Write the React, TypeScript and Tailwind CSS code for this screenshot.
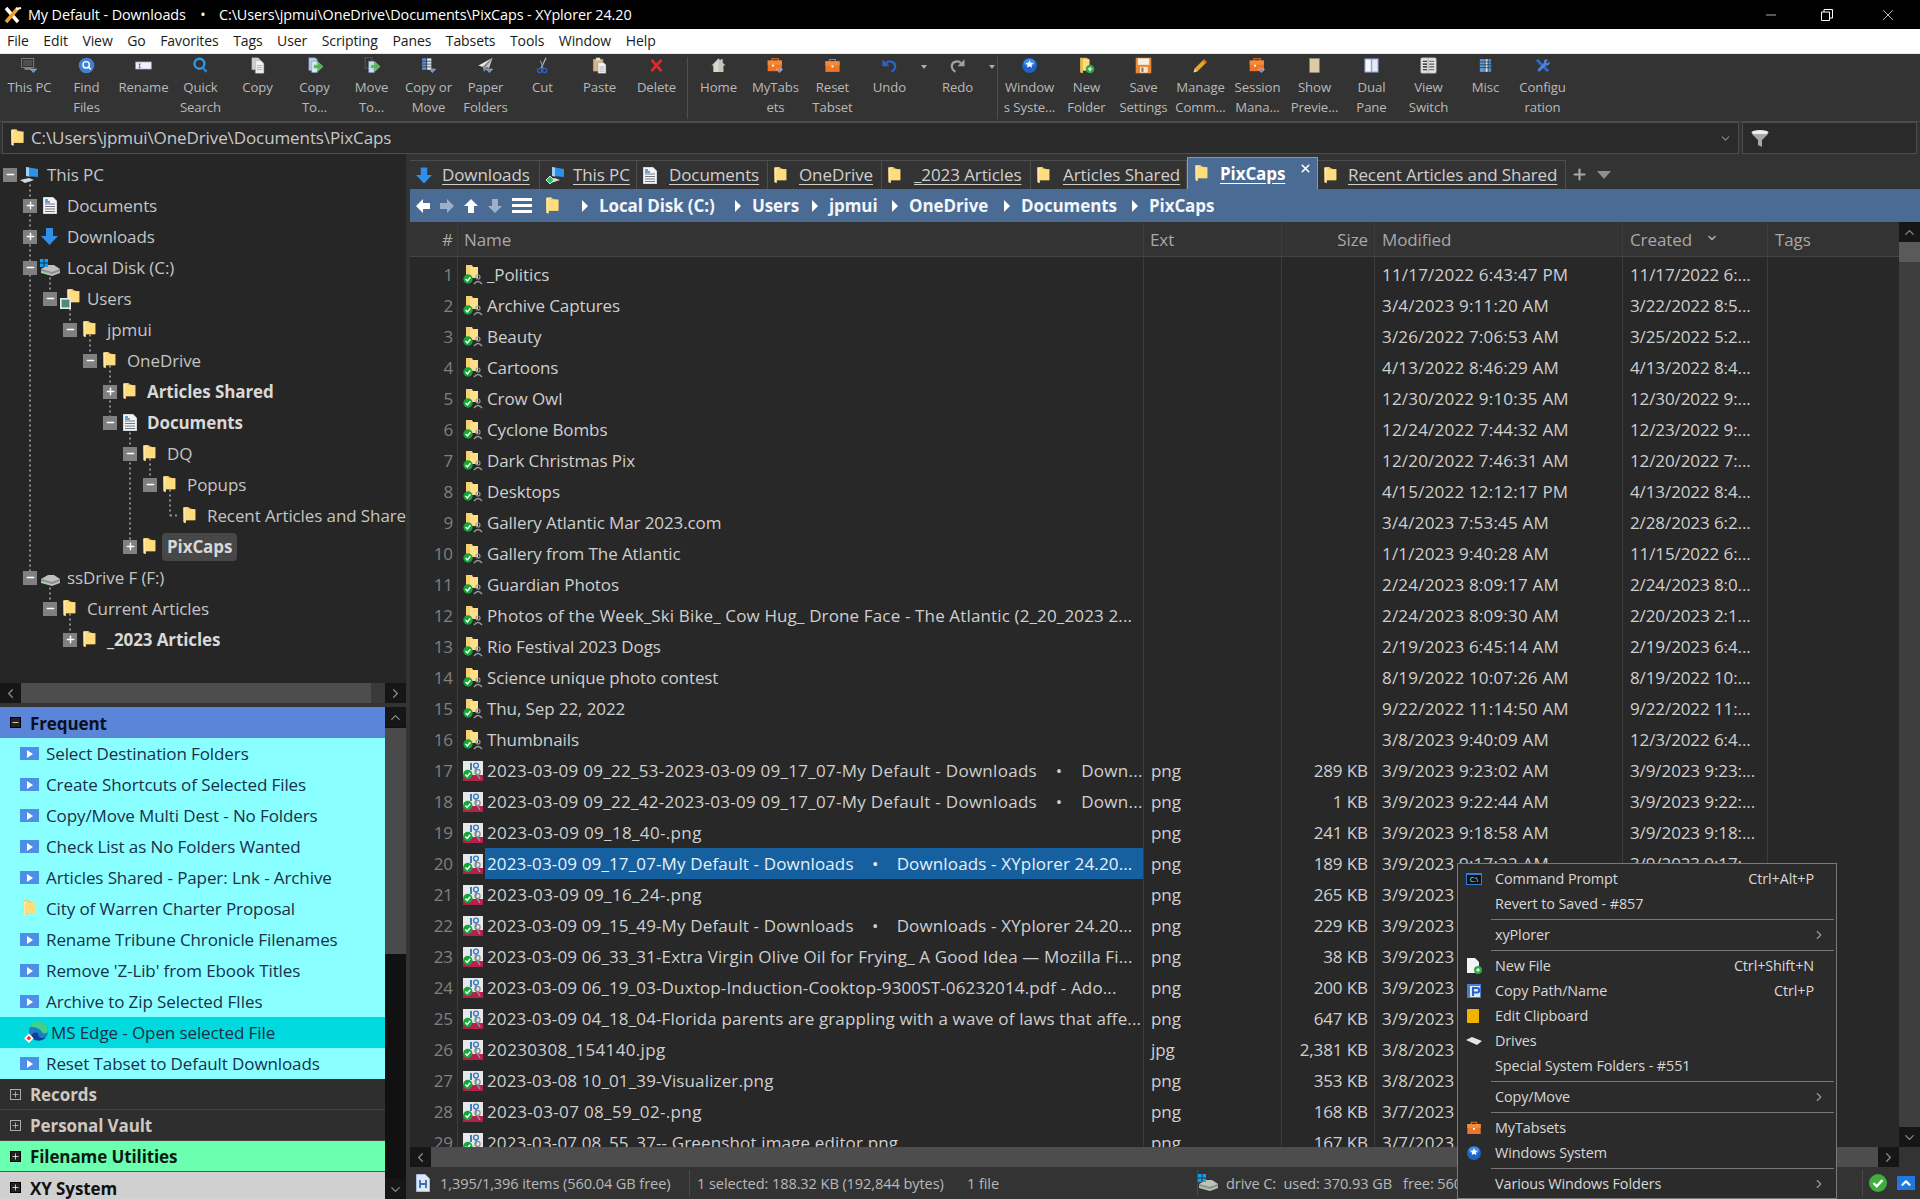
import type { ReactNode } from "react";
import { ChevronDown, ChevronLeft, ChevronRight, ChevronUp, Minus, Plus, X } from "lucide-react";

const Folder = ({ className = "w-[15px] h-[20px]" }: { className?: string }) => (
  <svg viewBox="0 0 15 20" className={className}>
    <path d="M0 1.5Q0 0 1.5 0H6L8 1.5L14 3.5V15.5H3V19L0.6 18Z" fill="#e8bd55" />
    <path d="M3 2.5L14.5 2.5V15.5H3Z" fill="#ffdc7c" />
    <path d="M0.5 1L7 .5L3 3V18.5L.5 18Z" fill="#ffe9a8" />
  </svg>
);

const Badge = ({ cx = 5, cy = 15 }: { cx?: number; cy?: number }) => (
  <g>
    <circle cx={cx} cy={cy} r="4.7" fill="#17a53a" />
    <path d={`M${cx - 2.4} ${cy}l1.8 1.9l3-3.6`} fill="none" stroke="#fff" strokeWidth="1.5" />
  </g>
);

const SyncFolder = () => (
  <svg viewBox="0 0 22 20" className="w-[22px] h-[20px] shrink-0">
    <path d="M3 0H9L10 2H15V13H3Z" fill="#f7d070" />
    <path d="M7 2H15V13H7Z" fill="#ffdf88" />
    <circle cx="15" cy="12" r="2" fill="none" stroke="#9a9a9a" strokeWidth="1.2" />
    <path d="M11 19q4-5 8 0" fill="none" stroke="#9a9a9a" strokeWidth="1.4" />
    <Badge cx={5} cy={14} />
  </svg>
);

const PicFile = () => (
  <svg viewBox="0 0 20 20" className="w-[20px] h-[20px] shrink-0">
    <rect width="20" height="20" fill="#e8e8e8" />
    <rect x="0" y="14" width="20" height="6" fill="#b5204c" />
    <rect x="7" y="2" width="2" height="7" fill="#3a7ec0" />
    <circle cx="13" cy="4.5" r="2.4" fill="none" stroke="#3a7ec0" strokeWidth="1.4" />
    <path d="M13 7v4" stroke="#3a7ec0" strokeWidth="1.4" />
    <path d="M12 10l5 8" stroke="#8aa" strokeWidth="1.2" />
    <circle cx="14.5" cy="11" r="2.6" fill="none" stroke="#888" strokeWidth="1.2" />
    <Badge cx={4.8} cy={13.5} />
  </svg>
);

const Triangle = () => <path d="M13 17h9l-4.5 5Z" fill="#5b8fd8" stroke="#ddd" strokeWidth=".7" />;

const Briefcase = ({ small }: { small?: boolean }) => (
  <svg viewBox="0 0 24 24" className={small ? "w-[16px] h-[16px]" : "w-[17px] h-[17px]"}>
    <path d="M8 7V3.5h8V7" fill="none" stroke="#e0752a" strokeWidth="1.6" />
    <rect x="2" y="6" width="20" height="15" fill="#ee7626" />
    <rect x="2" y="6" width="20" height="6" fill="#f58a3a" />
    <rect x="10.5" y="12" width="3" height="2.5" fill="#fff" />
  </svg>
);

const BallStar = ({ className = "w-[17px] h-[17px]" }: { className?: string }) => (
  <svg viewBox="0 0 24 24" className={className}>
    <circle cx="12" cy="12" r="10.5" fill="#1f62c8" />
    <ellipse cx="12" cy="8" rx="8" ry="5.5" fill="#3f8be8" />
    <path d="M12 4.5l1.7 3.7 4 .4-3 2.7.9 4-3.6-2.1-3.6 2.1.9-4-3-2.7 4-.4Z" fill="#fff" />
  </svg>
);

const toolIcons: Record<string, ReactNode> = {
  pc: (
    <svg viewBox="0 0 24 24" className="w-[17px] h-[17px]">
      <rect x="1" y="2" width="17" height="13" fill="#2c2c2c" stroke="#9a9a9a" />
      <rect x="3" y="4" width="13" height="9" fill="#4f4f4f" />
      <rect x="5" y="15" width="9" height="3" fill="#8a8a8a" />
      <Triangle />
    </svg>
  ),
  find: (
    <svg viewBox="0 0 24 24" className="w-[17px] h-[17px]">
      <circle cx="12" cy="12" r="11" fill="#3f82d2" />
      <circle cx="11.5" cy="11" r="4.5" fill="none" stroke="#fff" strokeWidth="2" />
      <path d="M15 14.5l3 3" stroke="#fff" strokeWidth="2.2" />
    </svg>
  ),
  rename: (
    <svg viewBox="0 0 24 24" className="w-[17px] h-[17px]">
      <rect x="1" y="7" width="22" height="10" fill="#eef2fa" stroke="#8fa4c4" />
      <path d="M5 10h3M6.5 10v5M5 15h3" stroke="#445" strokeWidth="1" />
    </svg>
  ),
  quick: (
    <svg viewBox="0 0 24 24" className="w-[17px] h-[17px]">
      <circle cx="10.5" cy="9.5" r="7" fill="none" stroke="#2f9ae8" strokeWidth="3.4" />
      <path d="M15 15l5.5 6" stroke="#2f7fd0" strokeWidth="3.6" />
    </svg>
  ),
  copy: (
    <svg viewBox="0 0 24 24" className="w-[17px] h-[17px]">
      <path d="M4 1h9l3 3v14H4Z" fill="#cfcfcf" stroke="#999" strokeWidth=".6" />
      <path d="M9 5h8l4 4v14H9Z" fill="#f2f2f2" stroke="#999" strokeWidth=".6" />
      <path d="M11 12h8M11 15h8M11 18h8" stroke="#9a9a9a" />
    </svg>
  ),
  copyTo: (
    <svg viewBox="0 0 24 24" className="w-[17px] h-[17px]">
      <path d="M4 1h9l3 3v15H4Z" fill="#b9cbe6" stroke="#6f8fc0" strokeWidth=".7" />
      <path d="M8 6h8v16H8Z" fill="#dce6f5" stroke="#6f8fc0" strokeWidth=".7" />
      <path d="M11 11h6V7l7 6.5-7 6.5v-4h-6Z" fill="#4fb84a" stroke="#c9f0c0" strokeWidth=".6" />
    </svg>
  ),
  moveTo: (
    <svg viewBox="0 0 24 24" className="w-[17px] h-[17px]">
      <path d="M3 1h10v15H3Z" fill="none" stroke="#7f9fd0" strokeDasharray="1.5 1.5" />
      <path d="M8 6h8v16H8Z" fill="#cfdcf0" stroke="#6f8fc0" strokeWidth=".7" />
      <path d="M11 11h6V7l7 6.5-7 6.5v-4h-6Z" fill="#4fb84a" stroke="#c9f0c0" strokeWidth=".6" />
    </svg>
  ),
  copyMove: (
    <svg viewBox="0 0 24 24" className="w-[17px] h-[17px]">
      <rect x="3" y="2" width="6" height="16" fill="#5f93d6" />
      <rect x="10" y="2" width="6" height="16" fill="#dfe8f5" />
      <path d="M3 6h13M3 10h13M3 14h13" stroke="#2b2b2b" />
      <Triangle />
    </svg>
  ),
  paper: (
    <svg viewBox="0 0 24 24" className="w-[17px] h-[17px]">
      <path d="M22 1L2 12l6 2Z" fill="#e6e6e6" />
      <path d="M22 1L8 14l2 7 3-4Z" fill="#8f8f8f" />
      <path d="M22 1l-5 15-4-2Z" fill="#c8c8c8" />
      <Triangle />
    </svg>
  ),
  cut: (
    <svg viewBox="0 0 24 24" className="w-[17px] h-[17px]">
      <path d="M17 1L10 16" stroke="#aab2c0" strokeWidth="1.8" />
      <path d="M9 5l4 11" stroke="#7f8da8" strokeWidth="1.6" />
      <circle cx="8" cy="19" r="3" fill="none" stroke="#2f62c0" strokeWidth="1.8" />
      <circle cx="15" cy="19" r="3" fill="none" stroke="#2f62c0" strokeWidth="1.8" />
    </svg>
  ),
  paste: (
    <svg viewBox="0 0 24 24" className="w-[17px] h-[17px]">
      <rect x="3" y="3" width="14" height="17" fill="#d4b585" stroke="#9a7b4a" strokeWidth=".6" />
      <rect x="7" y="1" width="6" height="4" fill="#e0e0e0" />
      <path d="M10 8h8l3 3v12H10Z" fill="#f4f4f4" stroke="#999" strokeWidth=".6" />
      <path d="M12 14h7M12 17h7M12 20h7" stroke="#9a9a9a" />
    </svg>
  ),
  del: (
    <svg viewBox="0 0 24 24" className="w-[17px] h-[17px]">
      <path d="M5 4l14 16M19 4L5 20" stroke="#e02a2a" strokeWidth="4" />
    </svg>
  ),
  home: (
    <svg viewBox="0 0 24 24" className="w-[17px] h-[17px]">
      <path d="M12 2L2 12h3v9h14v-9h3l-4-4V3h-3v2Z" fill="#c9c4ba" />
      <path d="M12 2L5 12v9h7Z" fill="#dcd8cf" />
    </svg>
  ),
  tabsDown: (
    <svg viewBox="0 0 24 24" className="w-[17px] h-[17px]">
      <path d="M7 6V2.5h9V6" fill="none" stroke="#e0752a" strokeWidth="1.6" />
      <rect x="1" y="5" width="20" height="15" fill="#ee7626" />
      <rect x="1" y="5" width="20" height="6" fill="#f58a3a" />
      <rect x="7" y="11" width="3" height="2.5" fill="#fff" />
      <Triangle />
    </svg>
  ),
  tabs: <Briefcase />,
  undo: (
    <svg viewBox="0 0 24 24" className="w-[17px] h-[17px]">
      <path d="M7 9c3-4 12-4 13 3 .5 4-2 7-5 9" fill="none" stroke="#2f62c8" strokeWidth="3.2" />
      <path d="M2 3v10h10Z" fill="#2f62c8" />
    </svg>
  ),
  redo: (
    <svg viewBox="0 0 24 24" className="w-[17px] h-[17px]">
      <path d="M17 9C14 5 5 5 4 12c-.5 4 2 7 5 9" fill="none" stroke="#9aa2ad" strokeWidth="3.2" />
      <path d="M22 3v10H12Z" fill="#9aa2ad" />
    </svg>
  ),
  win: <BallStar />,
  newFolder: (
    <svg viewBox="0 0 24 24" className="w-[17px] h-[17px]">
      <path d="M3 1h9l4 3v15H7v4l-4-1Z" fill="#e8bd55" />
      <path d="M7 3h9v16H7Z" fill="#ffdc7c" />
      <circle cx="17" cy="17" r="6" fill="#2fa84a" />
      <path d="M14 17h6M17 14v6" stroke="#fff" strokeWidth="1.6" />
    </svg>
  ),
  save: (
    <svg viewBox="0 0 24 24" className="w-[17px] h-[17px]">
      <rect x="1" y="1" width="22" height="22" fill="#e8893a" />
      <rect x="4" y="2" width="16" height="9" fill="#f8f0e4" />
      <rect x="7" y="14" width="11" height="8" fill="#f2e8d8" />
      <rect x="9" y="15" width="3" height="6" fill="#8a7a62" />
    </svg>
  ),
  pencil: (
    <svg viewBox="0 0 24 24" className="w-[17px] h-[17px]">
      <path d="M17 3l4 4L8 20l-4-4Z" fill="#f0a51e" />
      <path d="M17 3l4 4-2 2-4-4Z" fill="#e05a2a" />
      <path d="M4 16l4 4-6 2Z" fill="#f1d9ad" />
    </svg>
  ),
  show: (
    <svg viewBox="0 0 24 24" className="w-[17px] h-[17px]">
      <rect x="5" y="2" width="14" height="20" fill="#dccba6" stroke="#8f8570" strokeWidth=".6" />
    </svg>
  ),
  dual: (
    <svg viewBox="0 0 24 24" className="w-[17px] h-[17px]">
      <rect x="2" y="2" width="20" height="20" fill="#8ea4cc" />
      <rect x="3.5" y="3.5" width="7.5" height="17" fill="#f4f7fc" />
      <rect x="13" y="3.5" width="7.5" height="17" fill="#e4ebf7" />
    </svg>
  ),
  view: (
    <svg viewBox="0 0 24 24" className="w-[17px] h-[17px]">
      <rect x="1" y="1" width="22" height="22" rx="2" fill="#e4e4e4" stroke="#888" />
      <path d="M4 6h6M4 10h6M4 14h6M4 18h6" stroke="#111" strokeWidth="1.7" />
      <path d="M13 6h7M13 10h7M13 14h7M13 18h7" stroke="#555" strokeWidth="1.7" />
      <path d="M11.5 2v20" stroke="#999" />
    </svg>
  ),
  misc: (
    <svg viewBox="0 0 24 24" className="w-[17px] h-[17px]">
      <rect x="4" y="3" width="7" height="18" fill="#5f9bd8" />
      <rect x="12" y="3" width="3" height="18" fill="#dfe8f5" />
      <rect x="16" y="3" width="4" height="18" fill="#4f8ed0" />
      <path d="M4 7h16M4 11h16M4 15h16" stroke="#2b2b2b" />
    </svg>
  ),
  config: (
    <svg viewBox="0 0 24 24" className="w-[17px] h-[17px]">
      <path d="M4 4l16 16" stroke="#3568c4" strokeWidth="4" />
      <path d="M20 4c-3-2-7 0-6 4L5 18l2 3 10-9c4 1 6-3 5-6l-3 3-2-2Z" fill="#4a83dc" />
    </svg>
  ),
};

type Tool = { k: string; l1: string; l2?: string; arrow?: boolean };

const tools1: Tool[] = [
  { k: "pc", l1: "This PC" },
  { k: "find", l1: "Find", l2: "Files" },
  { k: "rename", l1: "Rename" },
  { k: "quick", l1: "Quick", l2: "Search" },
  { k: "copy", l1: "Copy" },
  { k: "copyTo", l1: "Copy", l2: "To..." },
  { k: "moveTo", l1: "Move", l2: "To..." },
  { k: "copyMove", l1: "Copy or", l2: "Move" },
  { k: "paper", l1: "Paper", l2: "Folders" },
  { k: "cut", l1: "Cut" },
  { k: "paste", l1: "Paste" },
  { k: "del", l1: "Delete" },
];
const tools2: Tool[] = [
  { k: "home", l1: "Home" },
  { k: "tabsDown", l1: "MyTabs", l2: "ets" },
  { k: "tabs", l1: "Reset", l2: "Tabset" },
  { k: "undo", l1: "Undo", arrow: true },
  { k: "redo", l1: "Redo", arrow: true },
];
const tools3: Tool[] = [
  { k: "win", l1: "Window", l2: "s Syste..." },
  { k: "newFolder", l1: "New", l2: "Folder" },
  { k: "save", l1: "Save", l2: "Settings" },
  { k: "pencil", l1: "Manage", l2: "Comm..." },
  { k: "tabsDown", l1: "Session", l2: "Mana..." },
  { k: "show", l1: "Show", l2: "Previe..." },
  { k: "dual", l1: "Dual", l2: "Pane" },
  { k: "view", l1: "View", l2: "Switch" },
  { k: "misc", l1: "Misc" },
  { k: "config", l1: "Configu", l2: "ration" },
];

const ToolButton = ({ t }: { t: Tool }) => (
  <div className="flex">
    <div className="w-[57px] flex flex-col items-center pt-[3px] text-[13.2px] leading-[20px] text-[#b9b9b9] whitespace-nowrap">
      <div className="h-[17px] mb-[3px]">{toolIcons[t.k]}</div>
      <span>{t.l1}</span>
      {t.l2 && <span>{t.l2}</span>}
    </div>
    {t.arrow && (
      <div className="w-[11px] pt-[11px] flex justify-center">
        <span className="border-x-[3.5px] border-x-transparent border-t-[4px] border-t-[#aaa] h-0 w-0" />
      </div>
    )}
  </div>
);

const Toolbar = () => (
  <div className="h-[68px] bg-[#333] border-b border-[#4a4a4a] flex pl-px shrink-0">
    {tools1.map((t, i) => (
      <ToolButton key={i} t={t} />
    ))}
    <div className="w-px h-[62px] mt-[3px] ml-[2px] mr-[2px] bg-[#4f4f4f]" />
    {tools2.map((t, i) => (
      <ToolButton key={i} t={t} />
    ))}
    <div className="w-px h-[62px] mt-[3px] mr-[3px] bg-[#4f4f4f]" />
    {tools3.map((t, i) => (
      <ToolButton key={i} t={t} />
    ))}
  </div>
);

const menus = ["File", "Edit", "View", "Go", "Favorites", "Tags", "User", "Scripting", "Panes", "Tabsets", "Tools", "Window", "Help"];

const TreeBox = ({ open }: { open: boolean }) => (
  <span className="w-[14px] h-[14px] bg-[#808080] flex items-center justify-center shrink-0 text-white">
    {open ? <Minus size={11} strokeWidth={3} /> : <Plus size={11} strokeWidth={3} />}
  </span>
);

const DocIcon = () => (
  <svg viewBox="0 0 14 17" className="w-[14px] h-[17px]">
    <path d="M0 0h10l4 4v13H0Z" fill="#f4f4f4" stroke="#888" strokeWidth=".5" />
    <path d="M2 7h10M2 9.5h10M2 12h10M2 14.5h10" stroke="#778" />
    <path d="M2 3h3M2 5h5" stroke="#2f8ae0" strokeWidth="1.3" />
  </svg>
);
const DownIcon = ({ className = "w-[17px] h-[17px]" }: { className?: string }) => (
  <svg viewBox="0 0 17 17" className={className}>
    <path d="M5 0h7v8h5l-8.500 9L0 8h5Z" fill="#2e90e8" />
  </svg>
);
const PcIcon = ({ sync }: { sync?: boolean }) => (
  <svg viewBox="0 0 20 18" className="w-[20px] h-[18px]">
    <path d="M6 1l12 2v8L6 10Z" fill="#2e90e8" />
    <path d="M6 1l3 .5v9L6 10Z" fill="#9fd0f5" />
    <path d="M0 14l9-2 5 2-9 3Z" fill="#d8d8d8" />
    {sync && <path d="M4 10l4 4-4 4-4-4Z" fill="#30c060" stroke="#fff" strokeWidth=".8" />}
  </svg>
);
const DiskIcon = ({ win }: { win?: boolean }) => (
  <svg viewBox="0 0 20 18" className="w-[20px] h-[18px]">
    <path d="M1 10l7-4h6l6 4v4l-8 3-11-3Z" fill="#bfbfbf" />
    <path d="M1 10l11 3 8-3v2l-8 3-11-3Z" fill="#8a8a8a" />
    <path d="M3 12l8 2v1l-8-2Z" fill="#6bd06b" />
    {win && (
      <g fill="#10a0f0">
        <rect x="0" y="0" width="3.500" height="3.500" />
        <rect x="4.500" y="0" width="3.500" height="3.500" />
        <rect x="0" y="4.500" width="3.500" height="3.500" />
        <rect x="4.500" y="4.500" width="3.500" height="3.500" />
      </g>
    )}
  </svg>
);

type TreeNode = { lvl: number; label: string; icon: ReactNode; box?: "+" | "-"; bold?: boolean; sel?: boolean };

const FolderPic = () => (
  <span className="relative flex w-[20px] h-[20px] justify-end">
    <Folder className="w-[13px] h-[17px]" />
    <svg viewBox="0 0 10 10" className="absolute left-0 bottom-0 w-[11px] h-[11px]">
      <rect width="10" height="10" fill="#e8e8e8" />
      <rect x="1.500" y="1.500" width="7" height="7" fill="#4f8a7a" />
    </svg>
  </span>
);

const tree: TreeNode[] = [
  { lvl: 0, label: "This PC", icon: <PcIcon />, box: "-" },
  { lvl: 1, label: "Documents", icon: <DocIcon />, box: "+" },
  { lvl: 1, label: "Downloads", icon: <DownIcon />, box: "+" },
  { lvl: 1, label: "Local Disk (C:)", icon: <DiskIcon win />, box: "-" },
  { lvl: 2, label: "Users", icon: <FolderPic />, box: "-" },
  { lvl: 3, label: "jpmui", icon: <Folder className="w-[13px] h-[17px]" />, box: "-" },
  { lvl: 4, label: "OneDrive", icon: <Folder className="w-[13px] h-[17px]" />, box: "-" },
  { lvl: 5, label: "Articles Shared", icon: <Folder className="w-[13px] h-[17px]" />, box: "+", bold: true },
  { lvl: 5, label: "Documents", icon: <DocIcon />, box: "-", bold: true },
  { lvl: 6, label: "DQ", icon: <Folder className="w-[13px] h-[17px]" />, box: "-" },
  { lvl: 7, label: "Popups", icon: <Folder className="w-[13px] h-[17px]" />, box: "-" },
  { lvl: 8, label: "Recent Articles and Shared", icon: <Folder className="w-[13px] h-[17px]" /> },
  { lvl: 6, label: "PixCaps", icon: <Folder className="w-[13px] h-[17px]" />, box: "+", bold: true, sel: true },
  { lvl: 1, label: "ssDrive F (F:)", icon: <DiskIcon />, box: "-" },
  { lvl: 2, label: "Current Articles", icon: <Folder className="w-[13px] h-[17px]" />, box: "-" },
  { lvl: 3, label: "_2023 Articles", icon: <Folder className="w-[13px] h-[17px]" />, box: "+", bold: true },
];

const indents = ["w-[3px]", "w-[23px]", "w-[43px]", "w-[63px]", "w-[83px]", "w-[103px]", "w-[123px]", "w-[143px]", "w-[163px]"];

const rowY = (n: number) => 20.5 + 31 * n;
const treeLines: [number, number, number][] = [
  [30, 0, 13],
  [50, 3, 4],
  [50, 13, 14],
  [70, 4, 5],
  [70, 14, 15],
  [90, 5, 6],
  [110, 6, 8],
  [130, 8, 12],
  [150, 9, 10],
  [170, 10, 11],
];

const Tree = () => (
  <div className="relative flex-1 bg-[#262626] pt-[5px] overflow-hidden">
    <svg className="absolute left-0 top-0 w-[406px] h-[530px]">
      {treeLines.map(([x, a, b], i) => (
        <path key={i} d={`M${x} ${rowY(a)}V${rowY(b)}`} stroke="#8a8a8a" strokeWidth="2" strokeDasharray="2 3" />
      ))}
      <path d={`M170 ${rowY(11)}h8`} stroke="#8a8a8a" strokeWidth="2" strokeDasharray="2 3" />
    </svg>
    {tree.map((n, i) => (
      <div key={i} className="relative flex items-center h-[31px] whitespace-nowrap">
        <span className={`${indents[n.lvl]} shrink-0`} />
        <span className="w-[14px] shrink-0 flex">{n.box && <TreeBox open={n.box === "-"} />}</span>
        <span className="w-[25px] flex justify-center shrink-0">{n.icon}</span>
        <span
          className={`h-[28px] flex items-center px-[5px] ${n.sel ? "bg-[#474747] rounded-sm" : ""} ${n.bold ? "font-bold text-[#d8d8d8]" : "text-[#c4c4c4]"}`}
        >
          {n.label}
        </span>
      </div>
    ))}
  </div>
);

const ScrollBtn = ({ dir }: { dir: "l" | "r" | "u" | "d" }) => (
  <span className="w-[21px] h-[20px] bg-[#161616] flex items-center justify-center text-[#8a8a8a] shrink-0">
    {dir === "l" && <ChevronLeft size={15} strokeWidth={2} />}
    {dir === "r" && <ChevronRight size={15} strokeWidth={2} />}
    {dir === "u" && <ChevronUp size={15} strokeWidth={2} />}
    {dir === "d" && <ChevronDown size={15} strokeWidth={2} />}
  </span>
);

const BlueBox = () => (
  <span className="w-[19px] h-[13px] bg-[#4d8fe6] flex items-center justify-center">
    <span className="border-y-[4px] border-y-transparent border-l-[6px] border-l-white" />
  </span>
);

const EdgeIcon = () => (
  <svg viewBox="0 0 26 22" className="w-[25px] h-[21px] mr-[-1px]">
    <circle cx="15" cy="10" r="10" fill="#1b7fc4" />
    <path d="M6 5a10 10 0 0 1 19 4c0 3-4 4-6 2-1-3-6-6-13-6Z" fill="#3fd08a" />
    <path d="M8 14c0 5 9 8 15 2-5 2-9 0-8-4-3-2-6-1-7 2Z" fill="#103f9a" />
    <path d="M5 12l5 5-5 5-5-5Z" fill="#fff" />
    <path d="M5 14.500l2.500 2.500-2.500 2.500-2.500-2.500Z" fill="#e03a2a" />
  </svg>
);

const catalogItems: { label: string; icon: "box" | "folder" | "edge" }[] = [
  { label: "Select Destination Folders", icon: "box" },
  { label: "Create Shortcuts of Selected Files", icon: "box" },
  { label: "Copy/Move Multi Dest - No Folders", icon: "box" },
  { label: "Check List as No Folders Wanted", icon: "box" },
  { label: "Articles Shared - Paper: Lnk - Archive", icon: "box" },
  { label: "City of Warren Charter Proposal", icon: "folder" },
  { label: "Rename Tribune Chronicle Filenames", icon: "box" },
  { label: "Remove 'Z-Lib' from Ebook Titles", icon: "box" },
  { label: "Archive to Zip Selected FIles", icon: "box" },
  { label: "MS Edge - Open selected File", icon: "edge" },
  { label: "Reset Tabset to Default Downloads", icon: "box" },
];

const CatBox = ({ open, dark }: { open: boolean; dark: boolean }) => (
  <span
    className={`w-[11px] h-[11px] border flex items-center justify-center shrink-0 ${dark ? "border-black bg-[#222] text-white" : "border-[#aaa] text-[#ccc]"}`}
  >
    {open ? <Minus size={9} strokeWidth={2} /> : <Plus size={9} strokeWidth={2} />}
  </span>
);

const CatHead = ({ label, cls, open, dark }: { label: string; cls: string; open?: boolean; dark?: boolean }) => (
  <div className={`h-[31px] shrink-0 flex items-center pl-[10px] gap-[9px] font-bold ${cls}`}>
    <CatBox open={!!open} dark={!!dark} />
    <span className="pt-[2px]">{label}</span>
  </div>
);

const Catalog = () => (
  <div className="h-[492px] flex shrink-0 overflow-hidden">
    <div className="w-[385px] flex flex-col overflow-hidden">
      <CatHead label="Frequent" cls="bg-[#5a85d9] text-[#0a1020]" open dark />
      {catalogItems.map((c) => (
        <div
          key={c.label}
          className={`h-[31px] shrink-0 flex items-center pl-[20px] text-[#18304a] whitespace-nowrap ${c.icon === "edge" ? "bg-[#00d9de] pl-[15px]" : "bg-[#8affff]"}`}
        >
          <span className={`flex justify-center shrink-0 ${c.icon === "edge" ? "w-[31px]" : "w-[26px]"}`}>
            {c.icon === "box" ? (
              <span className="mr-[7px]"><BlueBox /></span>
            ) : c.icon === "folder" ? (
              <span className="mr-[7px]"><Folder className="w-[13px] h-[18px]" /></span>
            ) : (
              <EdgeIcon />
            )}
          </span>
          <span className="pt-px">{c.label}</span>
        </div>
      ))}
      <CatHead label="Records" cls="bg-[#2e2e2e] text-[#cfc8c0] border-b border-[#444]" />
      <CatHead label="Personal Vault" cls="bg-[#2e2e2e] text-[#cfc8c0] border-b border-[#444]" />
      <CatHead label="Filename Utilities" cls="bg-[#6bffb0] text-[#0a1a12] border-b border-[#555]" dark />
      <CatHead label="XY System" cls="bg-[#d0d0d0] text-[#111]" dark />
    </div>
    <div className="w-[21px] bg-[#111] flex flex-col">
      <ScrollBtn dir="u" />
      <div className="h-[226px] mt-px bg-[#4a4a4a]" />
      <div className="flex-1" />
      <ScrollBtn dir="d" />
    </div>
  </div>
);

const tabs: { label: string; w: string; icon: ReactNode; active?: boolean; pad: string }[] = [
  { label: "Downloads", w: "w-[130px]", icon: <DownIcon className="w-[16px] h-[17px]" />, pad: "gap-[10px]" },
  { label: "This PC", w: "w-[97px]", icon: <PcIcon sync />, pad: "gap-[7px]" },
  { label: "Documents", w: "w-[131px]", icon: <DocIcon />, pad: "gap-[12px]" },
  { label: "OneDrive", w: "w-[114px]", icon: <Folder className="w-[13px] h-[17px]" />, pad: "gap-[12px]" },
  { label: "_2023 Articles", w: "w-[149px]", icon: <Folder className="w-[13px] h-[17px]" />, pad: "gap-[13px]" },
  { label: "Articles Shared", w: "w-[156px]", icon: <Folder className="w-[13px] h-[17px]" />, pad: "gap-[13px]" },
  { label: "PixCaps", w: "w-[131px]", icon: <Folder className="w-[13px] h-[17px]" />, pad: "gap-[12px]", active: true },
  { label: "Recent Articles and Shared", w: "w-[248px]", icon: <Folder className="w-[13px] h-[17px]" />, pad: "gap-[11px]" },
];

const TabStrip = () => (
  <div className="h-[35px] bg-[#333] flex items-end shrink-0 whitespace-nowrap">
    {tabs.map((t) =>
      t.active ? (
        <div
          key={t.label}
          className={`${t.w} h-[32px] relative bg-[#4a6b94] border-t border-x border-[#7d9ac0] flex items-center pl-[7px] ${t.pad} font-bold text-white`}
        >
          {t.icon}
          <span className="underline underline-offset-[3px]">{t.label}</span>
          <X size={13} strokeWidth={3} className="absolute right-[5px] top-[4px] text-white" />
        </div>
      ) : (
        <div
          key={t.label}
          className={`${t.w} h-[29px] flex items-center pl-[6px] ${t.pad} border-t border-r border-[#4d4d4d] text-[#cfcfcf]`}
        >
          {t.icon}
          <span className="underline underline-offset-[3px]">{t.label}</span>
        </div>
      ),
    )}
    <div className="h-[29px] flex items-center pl-[5px] gap-[9px] text-[#aaa]">
      <Plus size={17} strokeWidth={3} />
      <span className="border-x-[7px] border-x-transparent border-t-[8px] border-t-[#8f8f8f]" />
    </div>
  </div>
);

const NavArrow = ({ d, dim }: { d: string; dim?: boolean }) => (
  <svg viewBox="0 0 14 14" className="w-[14px] h-[14px]">
    <path d={d} fill={dim ? "#9db0c8" : "#fff"} />
  </svg>
);

const Caret = () => <span className="border-y-[6px] border-y-transparent border-l-[6px] border-l-white" />;

const crumbs = [
  { label: "Local Disk (C:)", w: "w-[136px]" },
  { label: "Users", w: "w-[60px]" },
  { label: "jpmui", w: "w-[63px]" },
  { label: "OneDrive", w: "w-[95px]" },
  { label: "Documents", w: "w-[111px]" },
  { label: "PixCaps", w: "" },
];

const Crumbs = () => (
  <div className="h-[33px] bg-[#4a6b94] flex items-center shrink-0 pl-[6px] font-bold text-[#f2f5fa] whitespace-nowrap">
    <span className="flex items-center gap-[10px]">
      <NavArrow d="M0 7L7 0V4H14V10H7V14Z" />
      <NavArrow d="M14 7L7 0V4H0V10H7V14Z" dim />
      <NavArrow d="M7 0L14 7H10V14H4V7H0Z" />
      <NavArrow d="M7 14L14 7H10V0H4V7H0Z" dim />
    </span>
    <span className="ml-[10px] w-[20px] flex flex-col gap-[3px]">
      <span className="h-[3px] bg-white" />
      <span className="h-[3px] bg-white" />
      <span className="h-[3px] bg-white" />
    </span>
    <span className="ml-[14px]">
      <Folder className="w-[13px] h-[20px]" />
    </span>
    <span className="ml-[23px] flex items-center">
      {crumbs.map((c) => (
        <span key={c.label} className="flex items-center">
          <Caret />
          <span className={`ml-[11px] ${c.w}`}>{c.label}</span>
        </span>
      ))}
    </span>
  </div>
);

type FileRow = { name: string; ext?: string; size?: string; mod: string; cre?: string; sel?: boolean; file?: boolean; wide?: boolean };

const bullet = "\u00a0\u00a0\u00a0\u00a0•\u00a0\u00a0\u00a0\u00a0";
const dash = "2023-03-09 09_17_07-My Default - Downloads" + bullet;
const rows: FileRow[] = [
  { name: "_Politics", mod: "11/17/2022 6:43:47 PM", cre: "11/17/2022 6:..." },
  { name: "Archive Captures", mod: "3/4/2023 9:11:20 AM", cre: "3/22/2022 8:5..." },
  { name: "Beauty", mod: "3/26/2022 7:06:53 AM", cre: "3/25/2022 5:2..." },
  { name: "Cartoons", mod: "4/13/2022 8:46:29 AM", cre: "4/13/2022 8:4..." },
  { name: "Crow Owl", mod: "12/30/2022 9:10:35 AM", cre: "12/30/2022 9:..." },
  { name: "Cyclone Bombs", mod: "12/24/2022 7:44:32 AM", cre: "12/23/2022 9:..." },
  { name: "Dark Christmas Pix", mod: "12/20/2022 7:46:31 AM", cre: "12/20/2022 7:..." },
  { name: "Desktops", mod: "4/15/2022 12:12:17 PM", cre: "4/13/2022 8:4..." },
  { name: "Gallery Atlantic Mar 2023.com", mod: "3/4/2023 7:53:45 AM", cre: "2/28/2023 6:2..." },
  { name: "Gallery from The Atlantic", mod: "1/1/2023 9:40:28 AM", cre: "11/15/2022 6:..." },
  { name: "Guardian Photos", mod: "2/24/2023 8:09:17 AM", cre: "2/24/2023 8:0..." },
  { name: "Photos of the Week_Ski Bike_ Cow Hug_ Drone Face - The Atlantic (2_20_2023 2...", mod: "2/24/2023 8:09:30 AM", cre: "2/20/2023 2:1..." },
  { name: "Rio Festival 2023 Dogs", mod: "2/19/2023 6:45:14 AM", cre: "2/19/2023 6:4..." },
  { name: "Science unique photo contest", mod: "8/19/2022 10:07:26 AM", cre: "8/19/2022 10:..." },
  { name: "Thu, Sep 22, 2022", mod: "9/22/2022 11:14:50 AM", cre: "9/22/2022 11:..." },
  { name: "Thumbnails", mod: "3/8/2023 9:40:09 AM", cre: "12/3/2022 6:4..." },
  { file: true, wide: true, name: "2023-03-09 09_22_53-" + dash + "Down...", ext: "png", size: "289 KB", mod: "3/9/2023 9:23:02 AM", cre: "3/9/2023 9:23:..." },
  { file: true, wide: true, name: "2023-03-09 09_22_42-" + dash + "Down...", ext: "png", size: "1 KB", mod: "3/9/2023 9:22:44 AM", cre: "3/9/2023 9:22:..." },
  { file: true, name: "2023-03-09 09_18_40-.png", ext: "png", size: "241 KB", mod: "3/9/2023 9:18:58 AM", cre: "3/9/2023 9:18:..." },
  { file: true, sel: true, name: dash + "Downloads - XYplorer 24.20...", ext: "png", size: "189 KB", mod: "3/9/2023 9:17:22 AM", cre: "3/9/2023 9:17:..." },
  { file: true, name: "2023-03-09 09_16_24-.png", ext: "png", size: "265 KB", mod: "3/9/2023" },
  { file: true, name: "2023-03-09 09_15_49-My Default - Downloads" + bullet + "Downloads - XYplorer 24.20...", ext: "png", size: "229 KB", mod: "3/9/2023" },
  { file: true, name: "2023-03-09 06_33_31-Extra Virgin Olive Oil for Frying_ A Good Idea — Mozilla Fi...", ext: "png", size: "38 KB", mod: "3/9/2023" },
  { file: true, name: "2023-03-09 06_19_03-Duxtop-Induction-Cooktop-9300ST-06232014.pdf - Ado...", ext: "png", size: "200 KB", mod: "3/9/2023" },
  { file: true, name: "2023-03-09 04_18_04-Florida parents are grappling with a wave of laws that affe...", ext: "png", size: "647 KB", mod: "3/9/2023" },
  { file: true, name: "20230308_154140.jpg", ext: "jpg", size: "2,381 KB", mod: "3/8/2023" },
  { file: true, name: "2023-03-08 10_01_39-Visualizer.png", ext: "png", size: "353 KB", mod: "3/8/2023" },
  { file: true, name: "2023-03-07 08_59_02-.png", ext: "png", size: "168 KB", mod: "3/7/2023" },
  { file: true, name: "2023-03-07 08_55_37-- Greenshot image editor.png", ext: "png", size: "167 KB", mod: "3/7/2023" },
];

const nameTracking = (r: FileRow) => {
  if (r.wide) return "tracking-[0.28px]";
  if (r.file && r.name.length < 30) return "tracking-[0.35px]";
  if (r.file || r.name.length > 40) return "tracking-[0.14px]";
  return "";
};

const cols = "grid grid-cols-[48px_686px_138px_93px_248px_145px_131px]";
const cell = "h-full flex items-center overflow-hidden whitespace-nowrap border-r border-[#3d3d3d]";

const FileList = () => (
  <div className="flex-1 flex min-h-0">
    <div className="w-[1489px] flex flex-col">
      <div className={`${cols} h-[35px] shrink-0 bg-[#333] border-b border-[#454545] text-[#a8a8a8]`}>
        <div className={`${cell} justify-end pr-[4px] pt-[2px]`}>#</div>
        <div className={`${cell} pl-[6px] pt-[2px]`}>Name</div>
        <div className={`${cell} pl-[6px] pt-[2px]`}>Ext</div>
        <div className={`${cell} justify-end pr-[6px] pt-[2px]`}>Size</div>
        <div className={`${cell} pl-[7px] pt-[2px]`}>Modified</div>
        <div className={`${cell} pl-[7px] gap-[14px] pt-[2px]`}>
          Created <ChevronDown size={12} strokeWidth={3.5} className="mb-[5px]" />
        </div>
        <div className={`${cell} pl-[7px] pt-[2px] border-r-0`}>Tags</div>
      </div>
      <div className="flex-1 overflow-hidden bg-[#282828] text-[#cfcfcf]">
        <div className={`${cols} h-[2px]`}>
          <div className={cell} />
          <div className={cell} />
          <div className={cell} />
          <div className={cell} />
          <div className={cell} />
          <div className={cell} />
        </div>
        {rows.map((r, i) => (
          <div key={i} className={`${cols} h-[31px]`}>
            <div className={`${cell} justify-end pr-[4px] text-[#808080]`}>{i + 1}</div>
            <div className={`${cell} pl-[5px]`}>
              <span className="w-[22px] shrink-0">{r.file ? <PicFile /> : <SyncFolder />}</span>
              <span
                className={`h-full flex items-center flex-1 pl-[2px] ${nameTracking(r)} ${r.sel ? "bg-[#17609f] text-[#e8f0f8]" : ""}`}
              >
                {r.name}
              </span>
            </div>
            <div className={`${cell} pl-[7px]`}>{r.ext}</div>
            <div className={`${cell} justify-end pr-[6px]`}>{r.size}</div>
            <div className={`${cell} pl-[7px] tracking-[0.2px]`}>{r.mod}</div>
            <div className={`${cell} pl-[7px]`}>{r.cre}</div>
            <div className="h-full" />
          </div>
        ))}
      </div>
    </div>
    <div className="w-[21px] bg-[#3e3e3e] flex flex-col">
      <ScrollBtn dir="u" />
      <div className="h-[20px] bg-[#5a5a5a]" />
      <div className="flex-1" />
      <ScrollBtn dir="d" />
    </div>
  </div>
);

const HBar = () => (
  <div className="h-[20px] flex shrink-0 bg-[#333]">
    <ScrollBtn dir="l" />
    <div className="w-[1447px] bg-[#4d4d4d]" />
    <ScrollBtn dir="r" />
  </div>
);

const StatusBar = () => (
  <div className="h-[32px] bg-[#333] flex items-center shrink-0 text-[14.6px] text-[#b8b8b8] whitespace-nowrap">
    <svg viewBox="0 0 14 18" className="ml-[6px] w-[14px] h-[18px]">
      <path d="M0 0h9l5 5v13H0Z" fill="#dfe8f5" stroke="#6f8fc0" />
      <path d="M4 6v8M10 6v8M4 10h6" stroke="#3a6cb0" strokeWidth="1.8" />
    </svg>
    <span className="ml-[10px] w-[249px]">1,395/1,396 items (560.04 GB free)</span>
    <span className="w-px h-[26px] bg-[#4a4a4a]" />
    <span className="ml-[7px] w-[270px]">1 selected: 188.32 KB (192,844 bytes)</span>
    <span className="w-[230px]">1 file</span>
    <span className="w-px h-[26px] bg-[#4a4a4a]" />
    <DiskIcon win />
    <span className="ml-[8px]">drive C:&nbsp; used: 370.93 GB &nbsp; free: 560.04 GB</span>
    <span className="flex-1" />
    <span className="w-px h-[26px] bg-[#4a4a4a] mr-[6px]" />
    <svg viewBox="0 0 18 18" className="w-[18px] h-[18px]">
      <circle cx="9" cy="9" r="9" fill="#3fae3f" />
      <path d="M4.500 9l3.200 3.300 5.800-6.300" fill="none" stroke="#fff" strokeWidth="2.400" />
    </svg>
    <span className="ml-[10px] mr-[5px] w-[18px] h-[14px] bg-[#1f78e0] text-white flex items-center justify-center">
      <ChevronUp size={14} strokeWidth={4} />
    </span>
  </div>
);

const MenuRow = ({ icon, label, keys, sub }: { icon?: ReactNode; label: string; keys?: string; sub?: boolean }) => (
  <div className="h-[25px] flex items-center text-[14.4px] text-[#d8d8d8] whitespace-nowrap">
    <span className="w-[37px] pl-[8px] flex items-center shrink-0">{icon}</span>
    <span className="flex-1">{label}</span>
    {keys && <span className="mr-[22px]">{keys}</span>}
    {sub && <ChevronRight size={14} className="mr-[10px] text-[#999]" />}
  </div>
);

const MenuSep = () => (
  <div className="h-[6px] flex items-center pl-[33px] pr-[2px]">
    <div className="w-full h-px bg-[#777]" />
  </div>
);

const ContextMenu = () => (
  <div className="absolute left-[1457px] top-[863px] w-[380px] h-[336px] bg-[#2b2b2b] border border-[#7a7a7a] pt-[2px] overflow-hidden">
    <MenuRow
      icon={
        <span className="w-[16px] h-[12px] bg-[#111] border border-[#2f7fd8] border-t-[2px] text-[7px] leading-[7px] text-[#ddd] flex items-center justify-center">C:\</span>
      }
      label="Command Prompt"
      keys="Ctrl+Alt+P"
    />
    <MenuRow label="Revert to Saved - #857" />
    <MenuSep />
    <MenuRow label="xyPlorer" sub />
    <MenuSep />
    <MenuRow
      icon={
        <svg viewBox="0 0 16 16" className="w-[16px] h-[16px]">
          <path d="M1 0h8l4 4v11H1Z" fill="#f4f4f4" />
          <circle cx="12" cy="12" r="4" fill="#2fa84a" />
          <path d="M10 12h4M12 10v4" stroke="#fff" />
        </svg>
      }
      label="New File"
      keys="Ctrl+Shift+N"
    />
    <MenuRow
      icon={
        <svg viewBox="0 0 16 16" className="w-[16px] h-[16px]">
          <rect x="1" y="1" width="14" height="14" fill="#3f7fd8" />
          <rect x="4" y="3" width="10" height="11" fill="#dfe8f5" />
          <path d="M7 13V5h4a2.200 2.200 0 0 1 0 4.500H7" fill="none" stroke="#2f62c0" strokeWidth="2" />
        </svg>
      }
      label="Copy Path/Name"
      keys="Ctrl+P"
    />
    <MenuRow icon={<span className="ml-px w-[12px] h-[14px] bg-[#f0b400] rounded-[1px]" />} label="Edit Clipboard" />
    <MenuRow
      icon={
        <svg viewBox="0 0 16 10" className="w-[16px] h-[10px]">
          <path d="M0 4l6-3 10 4-5 4Z" fill="#e4e4e4" />
        </svg>
      }
      label="Drives"
    />
    <MenuRow label="Special System Folders - #551" />
    <MenuSep />
    <MenuRow label="Copy/Move" sub />
    <MenuSep />
    <MenuRow icon={<Briefcase small />} label="MyTabsets" />
    <MenuRow icon={<BallStar className="w-[16px] h-[16px]" />} label="Windows System" />
    <MenuSep />
    <MenuRow label="Various Windows Folders" sub />
  </div>
);

export default function App() {
  return (
    <div className="relative w-[1920px] h-[1199px] overflow-hidden flex flex-col bg-[#333] font-['Open_Sans','Liberation_Sans',sans-serif] text-[17px] leading-[22px] tracking-[-0.1px]">
      <div className="h-[29px] bg-black text-white text-[14.4px] flex items-center shrink-0 whitespace-nowrap">
        <svg viewBox="0 0 20 18" className="ml-[3px] w-[20px] h-[18px]">
          <path d="M3 2l12 14" stroke="#fff" strokeWidth="3.500" />
          <path d="M15 2L3 16" stroke="#f0a030" strokeWidth="3.500" />
          <path d="M13 3l5-1" stroke="#fff" strokeWidth="2" />
        </svg>
        <span className="ml-[5px] w-[191px]">My Default - Downloads &nbsp; &nbsp;•</span>
        <span>C:\Users\jpmui\OneDrive\Documents\PixCaps - XYplorer 24.20</span>
        <span className="flex-1" />
        <Minus size={16} strokeWidth={1} className="mr-[42px]" />
        <svg viewBox="0 0 12 12" className="w-[12px] h-[12px] mr-[46px]">
          <path d="M.5 3h8v8.500h-8ZM3 3V.5h8.500V9H9" fill="none" stroke="#fff" />
        </svg>
        <X size={18} strokeWidth={1} className="mr-[23px]" />
      </div>
      <div className="h-[24px] bg-white text-[#1a1a1a] text-[14px] flex items-center gap-[14.6px] pl-[7px] shrink-0">
        {menus.map((m) => (
          <span key={m}>{m}</span>
        ))}
      </div>
      <div className="h-px bg-[#e8e8e8] shrink-0" />
      <Toolbar />
      <div className="h-[32px] bg-[#333] flex gap-[3px] pl-[2px] pr-[3px] shrink-0">
        <div className="w-[1737px] bg-[#2a2a2a] border border-[#4d4d4d] flex items-center text-[#c8c8c8] pl-[8px] pr-[6px]">
          <Folder className="w-[13px] h-[20px]" />
          <span className="ml-[7px] flex-1">C:\Users\jpmui\OneDrive\Documents\PixCaps</span>
          <ChevronDown size={13} className="text-[#888]" />
        </div>
        <div className="flex-1 bg-[#2a2a2a] border border-[#4d4d4d] flex items-center pl-[8px]">
          <svg viewBox="0 0 18 18" className="w-[18px] h-[18px]">
            <ellipse cx="9" cy="3.500" rx="8.500" ry="2.500" fill="#eee" />
            <path d="M1 5h16l-6 6v7l-4-2v-5Z" fill="#a8a8a8" />
          </svg>
        </div>
      </div>
      <div className="flex-1 flex min-h-0">
        <div className="w-[406px] flex flex-col shrink-0">
          <Tree />
          <div className="h-[20px] flex bg-[#3a3a3a] shrink-0">
            <ScrollBtn dir="l" />
            <div className="w-[350px] bg-[#4d4d4d]" />
            <div className="flex-1" />
            <ScrollBtn dir="r" />
          </div>
          <div className="h-[4px] shrink-0" />
          <Catalog />
        </div>
        <div className="w-[4px] shrink-0" />
        <div className="flex-1 flex flex-col min-w-0">
          <TabStrip />
          <Crumbs />
          <FileList />
          <HBar />
          <StatusBar />
        </div>
      </div>
      <ContextMenu />
    </div>
  );
}
